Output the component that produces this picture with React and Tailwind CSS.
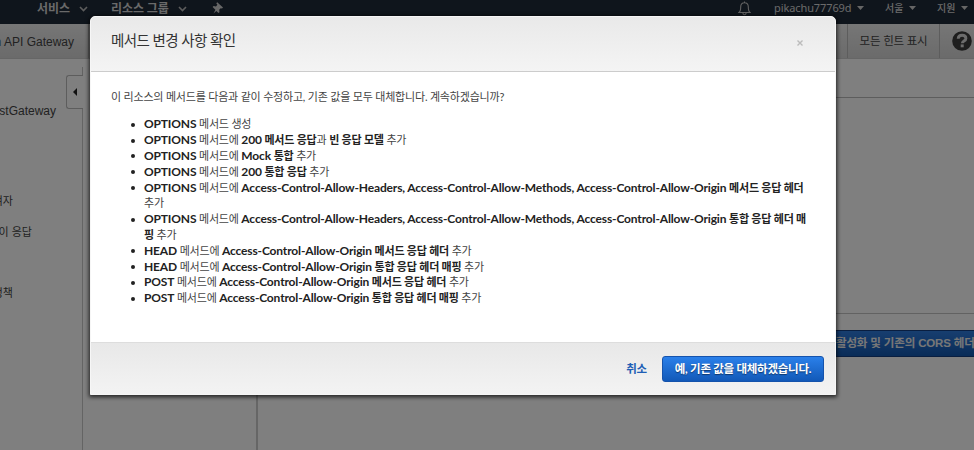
import React from "react";

const latoKr = "font-['Lato','Noto_Sans_CJK_KR',sans-serif]";
const sansKr = "font-['Liberation_Sans','Noto_Sans_CJK_KR',sans-serif]";
const notoKr = "font-['Noto_Sans','Noto_Sans_CJK_KR',sans-serif]";

const B = ({ children }) => <b className="font-bold text-[12px] tracking-[-0.15px] text-[#222]">{children}</b>;
const K = ({ children }) => <b className="font-bold text-[#222]">{children}</b>;

function Chevron({ className }) {
  return (
    <svg className={className} width="9" height="6" viewBox="0 0 9 6" fill="none" stroke="#bbb" strokeWidth="1.6">
      <path d="M1 1l3.5 3.5L8 1" />
    </svg>
  );
}

function Caret({ className }) {
  return (
    <svg className={className} width="7" height="4" viewBox="0 0 7 4" fill="#ccc">
      <path d="M0 0h7L3.5 4z" />
    </svg>
  );
}

function TopNav() {
  return (
    <header className={`${notoKr} flex h-6 shrink-0 items-start bg-[#1f2a38] pl-[37px] text-[#d4d4d4]`}>
      <span className="mt-px w-[33px] text-[12px] leading-4 font-bold whitespace-nowrap">서비스</span>
      <Chevron className="mt-[6px] ml-[9px]" />
      <span className="mt-px ml-[23px] w-[57px] text-[12px] leading-4 font-bold tracking-[-0.1px] whitespace-nowrap">리소스 그룹</span>
      <Chevron className="mt-[6px] ml-[10px]" />
      <svg className="mt-[2px] ml-[25px]" width="12" height="12" viewBox="0 0 12 12">
        <path d="M5.200 0.300 11 5.600l-1 .9-1.300-.3-1.500 1.500.3 2.500-1 .9-2.200-2.200L1.500 11.600l1.900-3.900L.6 5l1-.9 2.400.3L5.400 2.700 4.300 1.200z" fill="#d0d0d0" />
      </svg>
      <svg className="mt-px ml-auto" width="13" height="15" viewBox="0 0 13 15" fill="none" stroke="#c4c4c4" strokeWidth="1.1">
        <path d="M6.500 .5v1.200M1 11.500c1.500-1 1.700-2.500 1.700-5.500 0-2.700 1.500-4.200 3.800-4.200s3.800 1.500 3.800 4.200c0 3 .2 4.500 1.700 5.500zM4.800 12.200c.3 2 3.100 2 3.400 0" />
      </svg>
      <span className="ml-[23px] w-[77px] text-[11px] leading-4 tracking-[-0.1px] whitespace-nowrap">pikachu77769d</span>
      <Caret className="mt-[6px] ml-[6px]" />
      <span className="ml-[21px] w-[17px] text-[10px] leading-4 font-medium whitespace-nowrap">서울</span>
      <Caret className="mt-[6px] ml-[7px]" />
      <span className="ml-[21px] w-[17px] text-[10px] leading-4 font-medium whitespace-nowrap">지원</span>
      <Caret className="mt-[6px] mr-[6px] ml-[7px]" />
    </header>
  );
}

function Toolbar() {
  return (
    <div className={`${sansKr} flex h-[35px] shrink-0 items-stretch border-b border-[#ccc] bg-gradient-to-b from-[#ededed] to-[#d6d6d6] text-[12px] text-[#444]`}>
      <div className="flex w-[89px] items-center justify-end border-r border-[#bbb] pt-px pr-[14px] whitespace-nowrap">n API Gateway</div>
      <div className="ml-auto flex w-[93px] items-center justify-center border-x border-[#bbb] pt-[2px] text-[11.5px] tracking-[-0.25px] whitespace-nowrap">모든 힌트 표시</div>
      <div className="flex w-[34px] items-center pl-[12px]">
        <svg width="20" height="20" viewBox="0 0 20 20" className="shrink-0">
          <circle cx="10" cy="10" r="9.800" fill="#3c3c3c" />
          <path d="M6.200 7.700C6.300 5.300 8 4.300 10.100 4.300c2.100 0 3.800 1.200 3.800 3.100 0 2.600-3.600 2.500-3.600 4.800" fill="none" stroke="#d8d8d8" strokeWidth="2.900" />
          <rect x="8.700" y="13.400" width="3" height="2.900" fill="#d8d8d8" />
        </svg>
      </div>
    </div>
  );
}

function Sidebar() {
  return (
    <aside className={`${sansKr} w-[83px] shrink-0 text-[#444]`}>
      <div className="flex h-full flex-col items-end pt-2">
        <div className="h-2 w-px bg-[#c4c4c4]" />
        <div className="flex h-[34px] w-[17px] items-center justify-center rounded-l-[3px] border border-r-0 border-[#bbb]">
          <svg width="4" height="8" viewBox="0 0 4 8"><path d="M4 0v8L0 4z" fill="#222" /></svg>
        </div>
        <div className="flex w-full grow flex-col border-r border-[#c8c8c8] text-[11px] leading-4 whitespace-nowrap">
          <div className="-mt-[6px] flex w-[56px] justify-end text-[12px]">stGateway</div>
          <div className="mt-[74px] flex w-[13px] justify-end">여자</div>
          <div className="mt-[15px] flex w-[32px] justify-end">이 응답</div>
          <div className="mt-[45px] flex w-[13px] justify-end">정책</div>
        </div>
      </div>
    </aside>
  );
}

function Background() {
  return (
    <div className="flex h-full flex-col">
      <TopNav />
      <Toolbar />
      <div className="flex grow">
        <Sidebar />
        <div className="w-[175px] shrink-0 border-r-2 border-[#ccc]" />
        <main className="flex grow flex-col">
          <div className="h-[39px] border-b border-[#bbb]" />
          <div className="h-[216px] border-b border-[#c4c4c4]" />
          <div className={`${sansKr} mt-[16px] ml-[480px] flex h-[27px] items-center border-y border-[#123c80] bg-gradient-to-b from-[#2f7de0] to-[#1358b0] pt-px pl-[98px] text-[11.5px] font-bold tracking-[-0.15px] whitespace-nowrap text-[#eee]`}>
            활성화 및 기존의 CORS 헤더
          </div>
        </main>
      </div>
    </div>
  );
}

function Item({ children }) {
  return (
    <li className="flex">
      <span className="mt-[6.500px] mr-[9px] h-[4px] w-[4px] shrink-0 rounded-full bg-[#222]" />
      <div>{children}</div>
    </li>
  );
}

function Modal() {
  return (
    <section className={`${latoKr} absolute top-4 left-[90px] flex h-[379px] w-[746px] flex-col overflow-hidden rounded-t-[5px] border border-[#f6f6f6] bg-white text-[#444] shadow-[0_1px_4px_1px_rgba(0,0,0,0.75)]`}>
      <div className="flex h-[55px] shrink-0 items-start justify-between border-b border-[#ccc] bg-gradient-to-b from-[#e9e9e9] to-[#f4f4f4] pt-[14px] pr-[32px] pl-[20px]">
        <h2 className="text-[14.5px] leading-5 tracking-[-0.55px] text-[#333]">메서드 변경 사항 확인</h2>
        <svg className="mt-[9px]" width="6" height="6" viewBox="0 0 6 6" stroke="#bbb" strokeWidth="1.400"><path d="M.5.5l5 5M5.500.5l-5 5" /></svg>
      </div>
      <div className="grow pt-[17px] pl-[20px] text-[11px] leading-[15.8px] tracking-[-0.19px]">
        <p className="whitespace-nowrap">이 리소스의 메서드를 다음과 같이 수정하고, 기존 값을 모두 대체합니다. 계속하겠습니까?</p>
        <ul className="mt-[11.600px] pl-[20px] whitespace-nowrap">
          <Item><B>OPTIONS</B> 메서드 생성</Item>
          <Item><B>OPTIONS</B> 메서드에 <B>200</B> <K>메서드 응답</K>과 <K>빈 응답 모델</K> 추가</Item>
          <Item><B>OPTIONS</B> 메서드에 <B>Mock</B> <K>통합</K> 추가</Item>
          <Item><B>OPTIONS</B> 메서드에 <B>200</B> <K>통합 응답</K> 추가</Item>
          <Item><B>OPTIONS</B> 메서드에 <B>Access-Control-Allow-Headers, Access-Control-Allow-Methods, Access-Control-Allow-Origin</B> <K>메서드 응답 헤더</K><br />추가</Item>
          <Item><B>OPTIONS</B> 메서드에 <B>Access-Control-Allow-Headers, Access-Control-Allow-Methods, Access-Control-Allow-Origin</B> <K>통합 응답 헤더 매<br />핑</K> 추가</Item>
          <Item><B>HEAD</B> 메서드에 <B>Access-Control-Allow-Origin</B> <K>메서드 응답 헤더</K> 추가</Item>
          <Item><B>HEAD</B> 메서드에 <B>Access-Control-Allow-Origin</B> <K>통합 응답 헤더 매핑</K> 추가</Item>
          <Item><B>POST</B> 메서드에 <B>Access-Control-Allow-Origin</B> <K>메서드 응답 헤더</K> 추가</Item>
          <Item><B>POST</B> 메서드에 <B>Access-Control-Allow-Origin</B> <K>통합 응답 헤더 매핑</K> 추가</Item>
        </ul>
      </div>
      <div className="flex h-[52px] shrink-0 items-center justify-end border-t border-[#ddd] bg-gradient-to-b from-[#e8e8e8] to-[#f3f3f3] pr-[11px] text-[11.5px] font-bold tracking-[-0.25px]">
        <button className="w-[21px] whitespace-nowrap text-[#1f5fb5]">취소</button>
        <button className="ml-[15px] h-[26px] w-[162px] rounded-[3px] border border-[#1553ac] bg-gradient-to-b from-[#2a80ea] to-[#1259b8] whitespace-nowrap text-white [text-shadow:0_1px_1px_rgba(0,0,0,0.45)]">예, 기존 값을 대체하겠습니다.</button>
      </div>
    </section>
  );
}

export default function App() {
  return (
    <div className="relative h-[450px] w-[974px] overflow-hidden bg-white">
      <Background />
      <div className="absolute inset-0 bg-black/50" />
      <Modal />
    </div>
  );
}
